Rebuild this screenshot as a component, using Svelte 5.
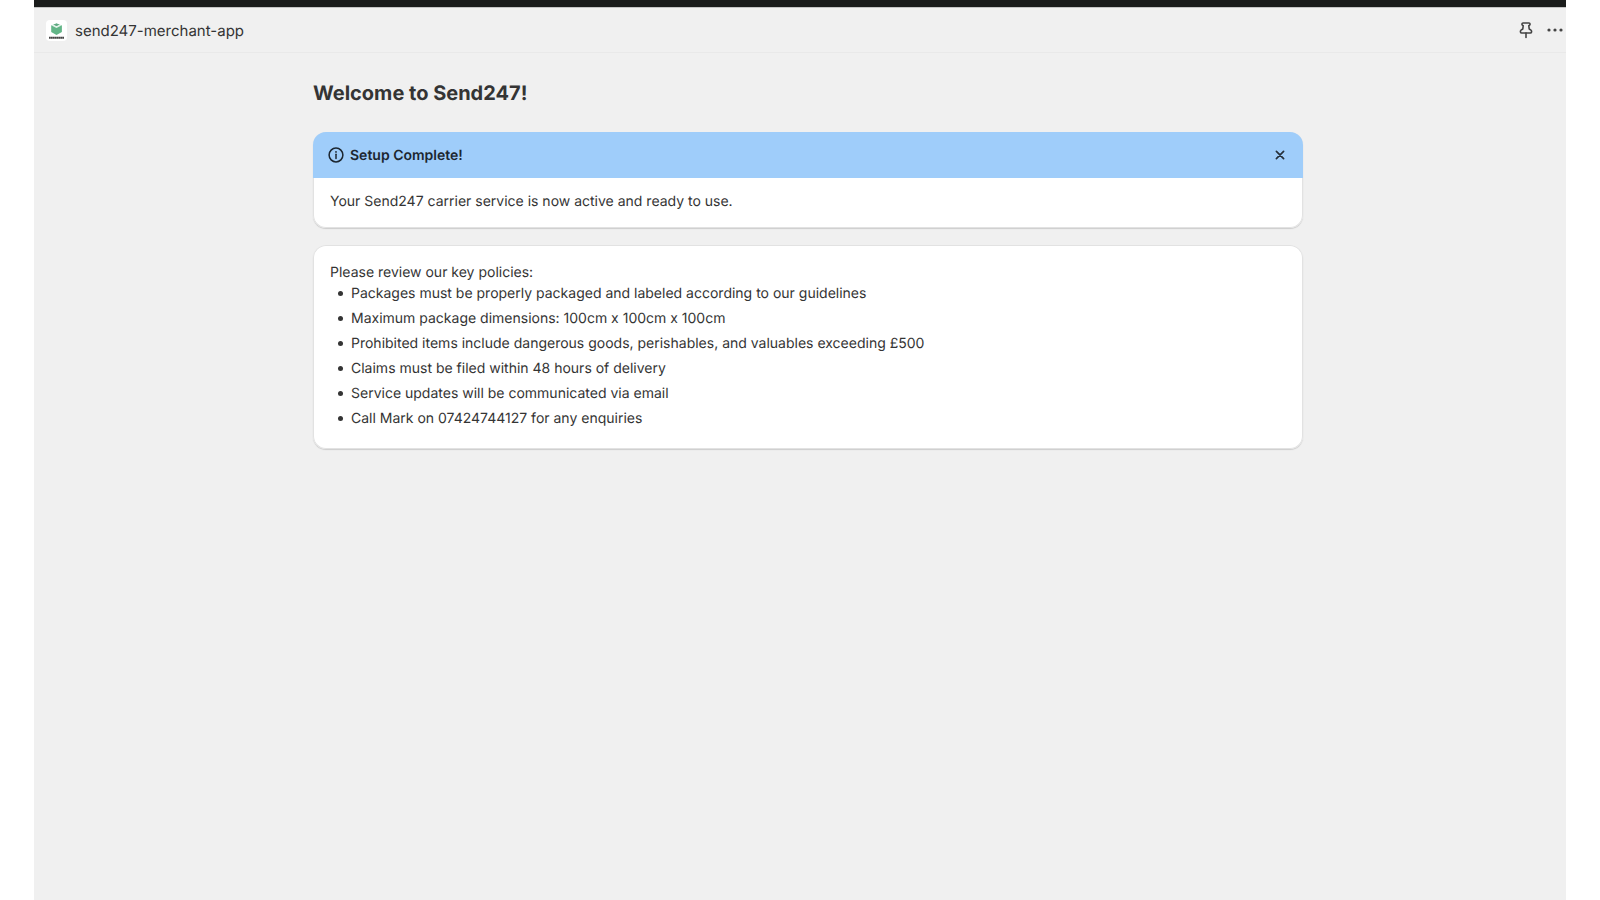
<script>
  let bannerOpen = $state(true);
  const policies = [
    'Packages must be properly packaged and labeled according to our guidelines',
    'Maximum package dimensions: 100cm x 100cm x 100cm',
    'Prohibited items include dangerous goods, perishables, and valuables exceeding £500',
    'Claims must be filed within 48 hours of delivery',
    'Service updates will be communicated via email',
    'Call Mark on 07424744127 for any enquiries'
  ];
</script>

<div class="frame">
  <header>
    <svg class="logo" viewBox="0 0 21 21" aria-hidden="true">
      <rect width="21" height="21" rx="4" fill="#fff" />
      <path d="M5.2 5.6 10.5 3.4 15.9 5.6V12L10.5 15 5.2 12Z" fill="#62b587" />
      <path d="M5.6 5.4 7.6 4.6 10.5 6 13.4 4.6 15.4 5.4 10.5 8Z" fill="#e4f3ea" />
      <path d="M7.6 4.6 10.5 3.4 13.4 4.6 10.5 6Z" fill="#62a983" />
      <path d="M3 17.8H18" stroke="#444" stroke-width="1.9" stroke-dasharray="1.8 .2" />
    </svg>
    <span class="name">send247-merchant-app</span>
    <button class="tool" aria-label="Pin app">
      <svg width="14" height="18" viewBox="0 0 14 18" fill="none" stroke="#444" stroke-width="1.6" stroke-linejoin="round" stroke-linecap="round">
        <path d="M4 2H10C11.2 2 11.4 3.7 10.4 4.3L9.8 4.7 10.2 8 12 9.2C13 10.2 12.6 12 11.4 12H2.6C1.4 12 1 10.2 2 9.2L3.8 8 4.2 4.7 3.6 4.3C2.6 3.7 2.8 2 4 2Z" />
        <path d="M7 12V16.4" />
      </svg>
    </button>
    <button class="tool" aria-label="More actions">
      <svg width="16" height="16" viewBox="0 0 16 16" fill="#444">
        <circle cx="2" cy="8" r="1.6" /><circle cx="8" cy="8" r="1.6" /><circle cx="14" cy="8" r="1.6" />
      </svg>
    </button>
  </header>

  <main>
    <div class="page">
      <h1>Welcome to Send247!</h1>
      {#if bannerOpen}
        <section class="card">
          <div class="banner">
            <svg width="16" height="16" viewBox="0 0 16 16" fill="none" stroke="#1c2630" stroke-width="1.5">
              <circle cx="8" cy="8" r="6.9" />
              <path d="M8 7.2V11.4" stroke-linecap="round" />
              <circle cx="8" cy="4.9" r=".9" fill="#1c2630" stroke="none" />
            </svg>
            <h2>Setup Complete!</h2>
            <button aria-label="Dismiss" onclick={() => (bannerOpen = false)}>
              <svg width="10" height="10" viewBox="0 0 10 10" stroke="#26303a" stroke-width="1.7" stroke-linecap="round">
                <path d="M1.4 1.4 8.6 8.6M8.6 1.4 1.4 8.6" />
              </svg>
            </button>
          </div>
          <p class="message">Your Send247 carrier service is now active and ready to use.</p>
        </section>
      {/if}
      <section class="card policies">
        <p>Please review our key policies:</p>
        <ul>
          {#each policies as policy}
            <li>{policy}</li>
          {/each}
        </ul>
      </section>
    </div>
  </main>
</div>

<style>
  :global(body) {
    margin: 0;
    background: #fff;
  }
  .frame {
    box-sizing: border-box;
    min-height: 100vh;
    margin: 0 34px;
    border-top: 7px solid #1a1c1b;
    background: #f0f0f0;
    color: #343434;
    font: 14px/21px Inter, sans-serif;
    text-rendering: geometricPrecision;
  }
  header {
    display: flex;
    align-items: center;
    height: 44px;
    padding: 0 3px 0 12px;
    border-top: 1px solid #c4c4c4;
    border-bottom: 1px solid #e9e9e9;
  }
  .logo {
    width: 21px;
    height: 21px;
  }
  .name {
    flex: 1;
    margin-left: 8px;
    font-size: 15px;
  }
  button {
    display: flex;
    padding: 0;
    border: 0;
    background: none;
    cursor: pointer;
  }
  .tool + .tool {
    margin-left: 14px;
  }
  main {
    padding: 26px 0 26px 16px;
  }
  .page {
    max-width: 990px;
    margin: 0 auto;
  }
  h1 {
    margin: 0 0 25px;
    font-size: 20px;
    line-height: 28px;
    font-weight: 700;
  }
  .card {
    overflow: hidden;
    border-radius: 13px;
    background: #fff;
    box-shadow: inset 0 0 0 1px #e2e2e2, 0 1px 1px #cccccc;
  }
  .banner {
    display: flex;
    align-items: center;
    height: 46px;
    padding: 0 18px 0 15px;
    background: #9fcdfa;
  }
  h2 {
    flex: 1;
    margin: 0 0 0 6px;
    color: #1c2630;
    font-size: 14px;
    line-height: 21px;
    font-weight: 600;
  }
  p {
    margin: 0;
  }
  .message {
    padding: 13px 17px 16px;
  }
  .policies {
    margin-top: 17px;
    padding: 17px 17px 16px;
  }
  ul {
    margin: 0;
    padding: 0;
    list-style: none;
  }
  li {
    display: flex;
    align-items: center;
    gap: 8px;
    margin-bottom: 4px;
    padding-left: 8px;
  }
  li::before {
    content: '';
    width: 5px;
    height: 5px;
    flex: none;
    border-radius: 50%;
    background: #343434;
  }
</style>
